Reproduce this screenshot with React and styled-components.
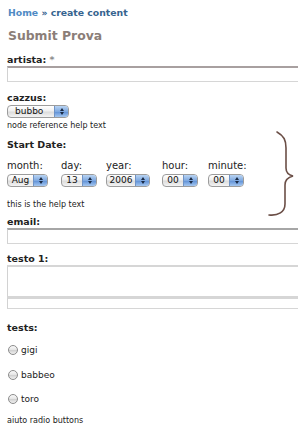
import React from "react";
import styled, { createGlobalStyle } from "styled-components";

const Global = createGlobalStyle`
  html, body { margin: 0; padding: 0; background: #fff; overflow: hidden; }
  body { font-family: "DejaVu Sans", Verdana, sans-serif; color: #222; }
`;

const Page = styled.div`
  position: relative;
  width: 298px;
  height: 428px;
  overflow: hidden;
  padding-left: 7px;
  box-sizing: border-box;
`;

const Crumbs = styled.div`
  margin-top: 6px;
  height: 14px;
  line-height: 14px;
  font-size: 9.3px;
  font-weight: bold;
  color: #36648f;
  padding-left: 1px;
  white-space: nowrap;
`;

const CrumbLink = styled.span`
  color: #4f8ac4;
`;

const Title = styled.h2`
  margin: 8px 0 0 1px;
  height: 16px;
  line-height: 16px;
  font-size: 12.4px;
  font-weight: bold;
  color: #8b7e78;
`;

const Label = styled.div`
  margin-top: ${(p) => p.$mt}px;
  height: 12px;
  line-height: 12px;
  font-size: 9.5px;
  font-weight: bold;
  color: #222;
  white-space: nowrap;
`;

const Req = styled.span`
  color: #8a8a8a;
`;

const TextInput = styled.div`
  width: 300px;
  height: ${(p) => p.$h}px;
  box-sizing: border-box;
  border-top: 2px solid ${(p) => p.$top};
  border-left: 1px solid #d2d2d2;
  border-bottom: 1px solid #d6d6d6;
  background: #fff;
`;

const Grippie = styled.div`
  width: 300px;
  height: 12px;
  box-sizing: border-box;
  border-top: 2px solid #d6d6d6;
  border-left: 1px solid #d2d2d2;
  border-bottom: 1px solid #d6d6d6;
`;

const Help = styled.div`
  margin-top: ${(p) => p.$mt}px;
  height: 10px;
  line-height: 10px;
  font-size: 8px;
  color: #222;
  white-space: nowrap;
`;

const SelectBox = styled.div`
  margin-top: ${(p) => p.$mt || 0}px;
  width: ${(p) => p.$w}px;
  height: 13px;
  box-sizing: border-box;
  display: flex;
  border: 1px solid #9c9c9c;
  border-radius: 4px;
  overflow: hidden;
  background: linear-gradient(#ffffff, #f0f0f0 45%, #dcdcdc 55%, #f4f4f4);
`;

const SelectText = styled.div`
  flex: 1;
  display: flex;
  align-items: center;
  justify-content: ${(p) => (p.$center ? "center" : "flex-start")};
  padding-left: ${(p) => (p.$center ? 0 : 7)}px;
  font-size: 9px;
  line-height: 11px;
  color: #111;
`;

const SelectArrows = styled.div`
  width: 13px;
  display: flex;
  flex-direction: column;
  align-items: center;
  justify-content: center;
  gap: 1px;
  border-left: 1px solid #6f93c6;
  background: linear-gradient(#b9d4f3, #7fa9e0 50%, #5d8fd6 52%, #a6c8f0);
`;

const Tri = styled.div`
  width: 0;
  height: 0;
  border-left: 2px solid transparent;
  border-right: 2px solid transparent;
  ${(p) =>
    p.$up
      ? "border-bottom: 3px solid #1a2a44;"
      : "border-top: 3px solid #1a2a44;"}
`;

const Select = ({ w, mt, center, children }) => (
  <SelectBox $w={w} $mt={mt}>
    <SelectText $center={center}>{children}</SelectText>
    <SelectArrows>
      <Tri $up />
      <Tri />
    </SelectArrows>
  </SelectBox>
);

const DateRow = styled.div`
  display: flex;
  margin-top: 9px;
`;

const DateCol = styled.div`
  width: ${(p) => p.$w}px;
  display: flex;
  flex-direction: column;
  gap: 2px;
`;

const DateLabel = styled.div`
  height: 12px;
  line-height: 12px;
  font-size: 10px;
  color: #222;
  white-space: nowrap;
`;

const Radios = styled.div`
  margin-top: 4px;
  display: flex;
  flex-direction: column;
`;

const RadioRow = styled.div`
  height: 24.5px;
  display: flex;
  align-items: center;
  gap: 3px;
  padding-left: 1px;
  font-size: 9px;
  color: #222;
`;

const RadioDot = styled.span`
  width: 10px;
  height: 10px;
  box-sizing: border-box;
  border-radius: 50%;
  border: 1px solid #8c8c8c;
  background: linear-gradient(#fafafa, #e4e4e4 50%, #cfcfcf 52%, #f2f2f2);
`;

const Brace = styled.svg`
  position: absolute;
  left: 262px;
  top: 128px;
  width: 36px;
  height: 92px;
`;

const dateCols = [
  { label: "month:", w: 54, sw: 41, val: "Aug" },
  { label: "day:", w: 45, sw: 36, val: "13" },
  { label: "year:", w: 56, sw: 44, val: "2006" },
  { label: "hour:", w: 46, sw: 36, val: "00" },
  { label: "minute:", w: 50, sw: 36, val: "00" },
];

export default function App() {
  return (
    <Page>
      <Global />
      <Crumbs>
        <CrumbLink>Home</CrumbLink> » create content
      </Crumbs>
      <Title>Submit Prova</Title>

      <Label $mt={10}>
        artista: <Req>*</Req>
      </Label>
      <TextInput $h={16} $top="#a8a0a0" />

      <Label $mt={10}>cazzus:</Label>
      <Select w={62} mt={1}>
        bubbo
      </Select>
      <Help $mt={3}>node reference help text</Help>

      <Label $mt={8}>Start Date:</Label>
      <DateRow>
        {dateCols.map((c) => (
          <DateCol key={c.label} $w={c.w}>
            <DateLabel>{c.label}</DateLabel>
            <Select w={c.sw} center>
              {c.val}
            </Select>
          </DateCol>
        ))}
      </DateRow>
      <Help $mt={13}>this is the help text</Help>

      <Label $mt={6}>email:</Label>
      <TextInput $h={16} $top="#a6a6a6" />

      <Label $mt={9}>testo 1:</Label>
      <TextInput $h={32} $top="#d6d6d6" />
      <Grippie />

      <Label $mt={13}>tests:</Label>
      <Radios>
        {["gigi", "babbeo", "toro"].map((r) => (
          <RadioRow key={r}>
            <RadioDot />
            {r}
          </RadioRow>
        ))}
      </Radios>
      <Help $mt={4}>aiuto radio buttons</Help>

      <Brace viewBox="0 0 36 92">
        <path
          d="M15 4 C22 8 24 12 24 20 L24 40 C24 45 27 47 31 48 C27 49 23 51 23 57 L23 76 C23 84 16 88 7 87"
          fill="none"
          stroke="#6b4f47"
          strokeWidth="1.6"
          strokeLinecap="round"
        />
      </Brace>
    </Page>
  );
}
